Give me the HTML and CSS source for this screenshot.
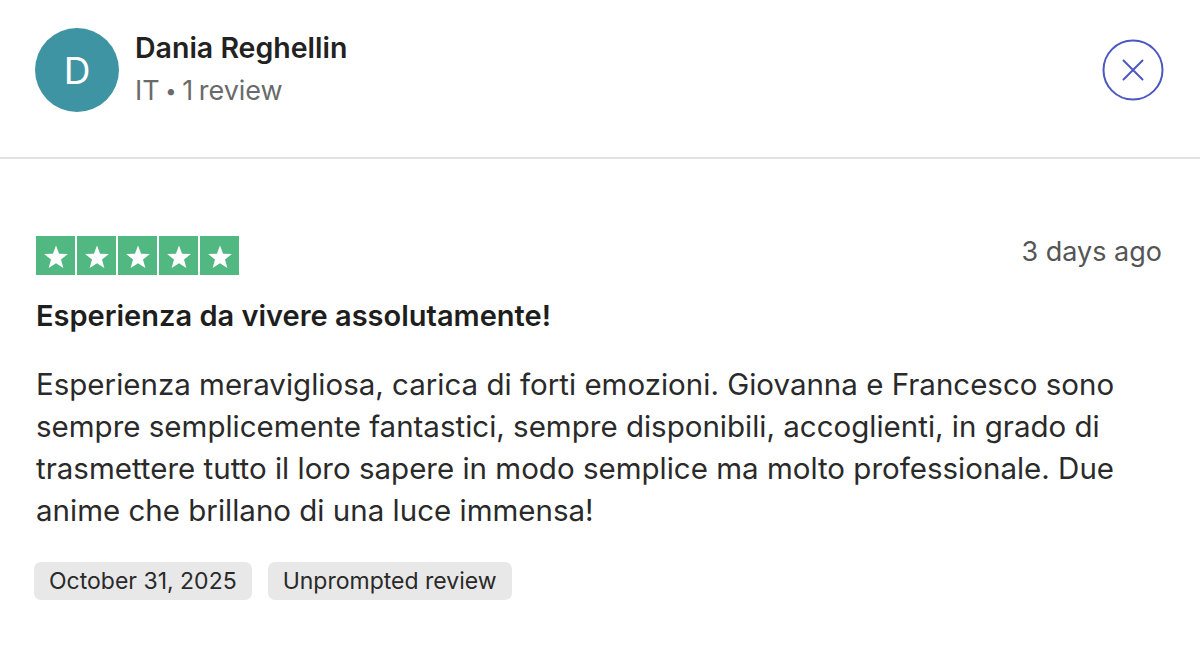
FILE: index.html
```html
<!DOCTYPE html>
<html lang="it">
<head>
<meta charset="utf-8">
<title>Review</title>
<link rel="stylesheet" href="styles.css">
</head>
<body>
<div class="page">
  <header class="header">
    <div class="user">
      <div class="avatar">D</div>
      <div class="user-info">
        <div class="name">Dania Reghellin</div>
        <div class="meta">IT <span class="dot">•</span> 1 review</div>
      </div>
    </div>
    <button class="close" aria-label="Close">
      <svg width="62" height="62" viewBox="0 0 62 62"><circle cx="31" cy="31" r="29.5" fill="none" stroke="#4a58c0" stroke-width="2"/><path d="M21.5 21.5 L40.5 40.5 M40.5 21.5 L21.5 40.5" stroke="#4a58c0" stroke-width="2" stroke-linecap="round"/></svg>
    </button>
  </header>
  <main class="review">
    <div class="review-top">
      <div class="stars">
        <span class="star"><svg viewBox="0 0 24 24"><path d="M12 3.5l2.45 6.6 7.05.3-5.5 4.4 1.9 6.8L12 17.7l-5.9 3.9 1.9-6.8-5.5-4.4 7.05-.3z" fill="#fff"/></svg></span>
        <span class="star"><svg viewBox="0 0 24 24"><path d="M12 3.5l2.45 6.6 7.05.3-5.5 4.4 1.9 6.8L12 17.7l-5.9 3.9 1.9-6.8-5.5-4.4 7.05-.3z" fill="#fff"/></svg></span>
        <span class="star"><svg viewBox="0 0 24 24"><path d="M12 3.5l2.45 6.6 7.05.3-5.5 4.4 1.9 6.8L12 17.7l-5.9 3.9 1.9-6.8-5.5-4.4 7.05-.3z" fill="#fff"/></svg></span>
        <span class="star"><svg viewBox="0 0 24 24"><path d="M12 3.5l2.45 6.6 7.05.3-5.5 4.4 1.9 6.8L12 17.7l-5.9 3.9 1.9-6.8-5.5-4.4 7.05-.3z" fill="#fff"/></svg></span>
        <span class="star"><svg viewBox="0 0 24 24"><path d="M12 3.5l2.45 6.6 7.05.3-5.5 4.4 1.9 6.8L12 17.7l-5.9 3.9 1.9-6.8-5.5-4.4 7.05-.3z" fill="#fff"/></svg></span>
      </div>
      <div class="ago">3 days ago</div>
    </div>
    <h2 class="title">Esperienza da vivere assolutamente!</h2>
    <p class="body">Esperienza meravigliosa, carica di forti emozioni. Giovanna e Francesco sono sempre semplicemente fantastici, sempre disponibili, accoglienti, in grado di trasmettere tutto il loro sapere in modo semplice ma molto professionale. Due anime che brillano di una luce immensa!</p>
    <div class="tags">
      <span class="tag">October 31, 2025</span>
      <span class="tag">Unprompted review</span>
    </div>
  </main>
</div>
</body>
</html>
```
FILE: styles.css
```css
* { box-sizing: border-box; }
html, body { margin: 0; padding: 0; background: #fff; }
body {
  font-family: Inter, "Noto Sans", "Liberation Sans", sans-serif;
  color: #1c1c1c;
  width: 1200px;
  height: 660px;
  overflow: hidden;
}
.header {
  display: flex;
  align-items: flex-start;
  justify-content: space-between;
  height: 159px;
  padding: 28px 36px 0 35px;
  border-bottom: 2px solid #e2e2e2;
}
.user { display: flex; align-items: center; gap: 16px; }
.avatar {
  width: 84px; height: 84px; border-radius: 50%;
  background: #3f94a3;
  color: #fff;
  display: flex; align-items: center; justify-content: center;
  font-size: 37px; font-weight: 400;
  flex: none;
}
.user-info { display: flex; flex-direction: column; gap: 10px; margin-top: -2px; }
.name { font-size: 28.5px; line-height: 34px; font-weight: 600; color: #222; }
.meta { font-size: 27px; line-height: 32px; color: #6a6a6a; word-spacing: -2px; }
.meta .dot { font-size: 20px; vertical-align: 2px; }
.close {
  background: none; border: 0; padding: 0;
  width: 62px; height: 62px; display: block;
  margin-top: 11px; cursor: pointer;
}
.close svg { display: block; }
.review { padding: 77px 38px 0 36px; }
.review-top { display: flex; justify-content: space-between; align-items: flex-start; }
.stars { display: flex; gap: 2px; }
.star {
  width: 39px; height: 39px; background: #52b882;
  display: flex; align-items: center; justify-content: center;
}
.star svg { width: 30px; height: 30px; display: block; }
.ago { font-size: 27px; line-height: 32px; color: #555; }
.title { font-size: 29px; line-height: 36px; font-weight: 600; margin: 23px 0 0; color: #1e1e1e; }
.body { font-size: 29.5px; line-height: 42px; margin: 29px 0 0; color: #2a2a2a; }
.tags { display: flex; gap: 16px; margin: 31px 0 0 -2px; }
.tag {
  background: #e8e8e8; border-radius: 7px;
  font-size: 23px; color: #2a2a2a;
  height: 38px; padding: 0 15px;
  display: flex; align-items: center;
}
```
